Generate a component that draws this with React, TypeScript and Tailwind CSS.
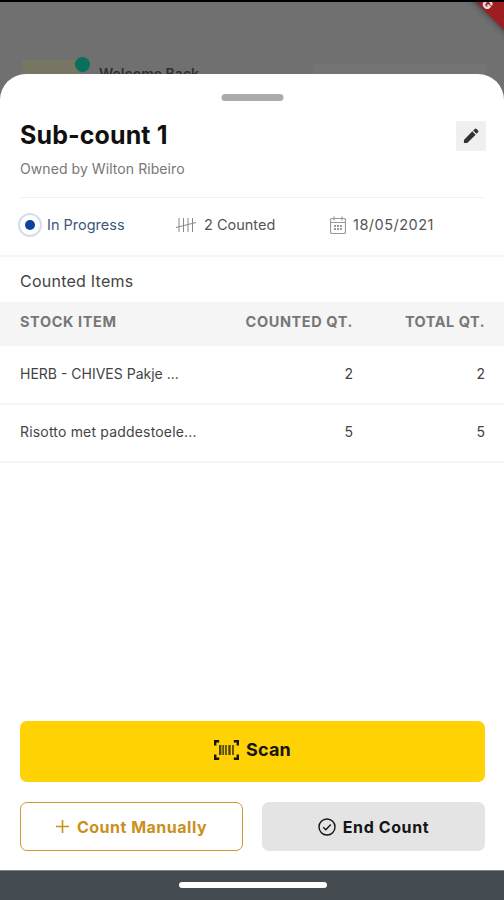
import type { ReactNode } from "react"

const items = [
  { name: "HERB - CHIVES Pakje ...", counted: 2, total: 2, nameClass: "tracking-[0px]" },
  { name: "Risotto met paddestoele...", counted: 5, total: 5, nameClass: "tracking-[0.18px]" },
]

function PencilIcon() {
  return (
    <svg className="w-5 h-5" viewBox="0 0 24 24" fill="currentColor">
      <path d="M3.5 16.8V20.5h4L17.6 10.4l-4-4L3.5 16.8zM20.5 7.5a1.6 1.6 0 0 0 0-2.2l-1.8-1.8a1.6 1.6 0 0 0-2.2 0l-1.9 1.9 4 4 1.9-1.9z" />
    </svg>
  )
}

function TallyIcon() {
  return (
    <svg className="w-[22px] h-4" viewBox="0 0 22 16" fill="none" stroke="currentColor" strokeWidth="1">
      <path d="M4 1v14M8.5 1v14M13 1v14M17.5 1v14M1 10.5 21 5.5" />
    </svg>
  )
}

function CalendarIcon() {
  return (
    <svg className="w-4 h-[18px]" viewBox="0 0 16 18" fill="none" stroke="currentColor" strokeWidth="1.2">
      <rect x="0.5" y="2.5" width="15" height="15" rx="1.5" />
      <path d="M0.5 6.5h15M4 0.5v4M12 0.5v4" />
      <path d="M4 10h8M4 13h8" strokeWidth="2" strokeDasharray="2 1" />
    </svg>
  )
}

function BarcodeIcon() {
  return (
    <svg className="w-[25px] h-5" viewBox="0 0 25 20" fill="none" stroke="currentColor">
      <path d="M1.2 5.5V1.2h4M19.8 1.2h4v4.3M23.8 14.5v4.3h-4M5.2 18.8h-4v-4.3" strokeWidth="2.4" />
      <path d="M6.2 5v10M15.5 5v10" strokeWidth="2.4" opacity="0.75" />
      <path d="M9.2 5v10M12 5v10M19 5v10" strokeWidth="1.8" opacity="0.7" />
    </svg>
  )
}

function CheckCircleIcon() {
  return (
    <svg className="w-[18px] h-[18px]" viewBox="0 0 18 18" fill="none" stroke="currentColor" strokeWidth="1.4">
      <circle cx="9" cy="9" r="8" />
      <path d="m5.2 9.2 2.6 2.5 5-5.2" />
    </svg>
  )
}

function Stat({ icon, children, className }: { icon: ReactNode; children: ReactNode; className: string }) {
  return (
    <div className={`flex items-center ${className}`}>
      {icon}
      <span>{children}</span>
    </div>
  )
}

export default function App() {
  return (
    <div className="relative flex h-[900px] w-[504px] flex-col overflow-hidden bg-[#707070] font-['Inter','Liberation_Sans',sans-serif]">
      {/* Dimmed page behind the sheet */}
      <div className="relative h-[100px] shrink-0 overflow-hidden border-t-2 border-black">
        <div className="absolute left-[22px] top-[58px] h-4 w-[58px] bg-[#777563]" />
        <div className="absolute left-[75px] top-[55px] h-[15px] w-[15px] rounded-full bg-[#08705d]" />
        <div className="absolute left-[99px] top-[62px] text-[14px] font-semibold leading-5 text-[#303030] whitespace-nowrap">
          Welcome Back
        </div>
        <div className="absolute left-[314px] top-[62px] h-3 w-[172px] bg-[#747474]" />
        <div className="absolute left-[444px] top-[-6px] flex h-6 w-[110px] rotate-45 items-end justify-end bg-[#9d1d20] pb-px pr-[61px] text-[13px] font-black leading-[11px] text-[#ddd] shadow-[0_0_7px_#333]">
          DEBUG
        </div>
      </div>

      {/* Bottom sheet */}
      <div className="relative -mt-[26px] flex flex-1 flex-col rounded-t-[26px] bg-white">
        <div className="mx-auto mt-[19.5px] h-[7px] w-[62px] shrink-0 translate-x-[0.5px] rounded-full bg-[#ababab]" />

        <header className="mx-5 flex h-[97px] justify-between border-b border-[#f0f0f0]">
          <div className="pt-[18px]">
            <h1 className="text-[25px] font-bold leading-8 tracking-[0.1px] text-[#101010]">Sub-count 1</h1>
            <p className="mt-[8px] text-[14px] leading-5 tracking-[0.07px] text-[#777]">Owned by Wilton Ribeiro</p>
          </div>
          <button className="mt-5 mr-[-2px] flex h-[30px] w-[30px] items-center justify-center rounded-[2px] bg-[#f0f0f0] text-[#333]">
            <PencilIcon />
          </button>
        </header>

        <div className="flex h-[59px] shrink-0 items-center border-b-2 border-[#f5f5f5] pb-[3px] text-[14.5px] text-[#555]">
          <Stat
            className="ml-[18px] w-[157px] gap-[5px] text-[#3c587c]"
            icon={
              <span className="flex h-6 w-6 items-center justify-center rounded-full border-2 border-[#d3deed]">
                <span className="h-[10px] w-[10px] rounded-full bg-[#0b449c]" />
              </span>
            }
          >
            In Progress
          </Stat>
          <Stat className="w-[155px] gap-[7px]" icon={<span className="text-[#888]"><TallyIcon /></span>}>
            2 Counted
          </Stat>
          <Stat className="gap-[7px] tracking-[0.5px]" icon={<span className="text-[#999]"><CalendarIcon /></span>}>
            18/05/2021
          </Stat>
        </div>

        <h2 className="flex h-[45px] items-center px-5 pt-[3px] text-[16px] tracking-[0.24px] text-[#444]">Counted Items</h2>
        <table className="w-full table-fixed text-[#444]">
          <thead>
            <tr className="h-11 bg-[#f5f5f5] text-[14.5px] text-[#777]">
              <th className="w-[220px] pb-[3px] pl-5 text-left font-bold tracking-[0.6px]">STOCK ITEM</th>
              <th className="w-[133px] pb-[3px] text-right font-bold tracking-[0.6px]">COUNTED QT.</th>
              <th className="pb-[3px] pr-[19px] text-right font-bold tracking-[0.5px]">TOTAL QT.</th>
            </tr>
          </thead>
          <tbody>
            {items.map((item) => (
              <tr key={item.name} className="h-[58px] border-b-2 border-[#f6f6f6] text-[14px]">
                <td className={`whitespace-nowrap pb-[2px] pl-5 ${item.nameClass}`}>{item.name}</td>
                <td className="pb-[2px] text-right">{item.counted}</td>
                <td className="pb-[2px] pr-[19px] text-right">{item.total}</td>
              </tr>
            ))}
          </tbody>
        </table>

        <div className="mt-auto pb-[19px] pl-5 pr-[19px] text-[16px] font-bold text-[#151515]">
          <button className="flex h-[61px] w-full items-center justify-center gap-[7px] rounded-[7px] bg-[#ffd204] pb-[4px] text-[18px] tracking-[0.2px]">
            <BarcodeIcon />
            Scan
          </button>
          <div className="mt-5 grid grid-cols-2 gap-[19px]">
            <button className="flex h-[49px] items-center justify-center gap-2 rounded-[7px] border border-[#c99a38] tracking-[0.5px] text-[#ca9020]">
              <svg className="w-[13px] h-[13px]" viewBox="0 0 13 13" fill="none" stroke="currentColor" strokeWidth="1.6">
                <path d="M6.5 0v13M0 6.5h13" />
              </svg>
              Count Manually
            </button>
            <button className="flex h-[49px] items-center justify-center gap-[7px] rounded-[7px] bg-[#e4e4e4] tracking-[0.6px]">
              <CheckCircleIcon />
              End Count
            </button>
          </div>
        </div>
      </div>

      <div className="flex h-[30px] shrink-0 items-center justify-center border-t border-[#7d8487] bg-[#444c52]">
        <div className="h-[6px] w-[148px] translate-x-px -translate-y-px rounded-full bg-white" />
      </div>
    </div>
  )
}
